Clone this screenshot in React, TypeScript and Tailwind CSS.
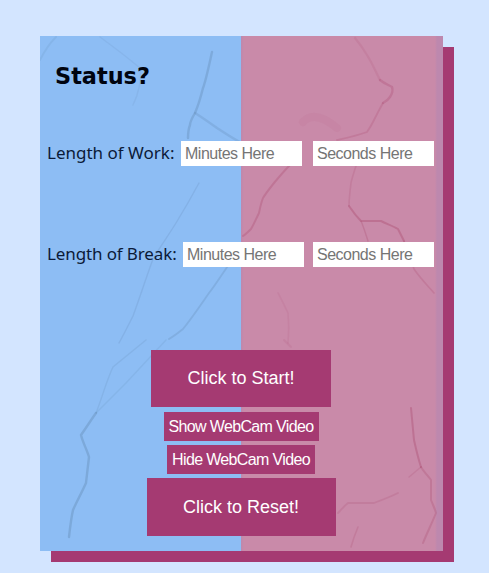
type Vein = [string, number, number];

const blueVeins: Vein[] = [
  ["M212 52 C208 70 206 80 203 88 C200 100 198 106 195 113 C192 118 190 122 190 125 C188 130 188 134 188 138", 2.4, 0.28],
  ["M195 113 C203 118 210 123 217 128 C225 133 232 138 240 142", 2.4, 0.2],
  ["M100 37 C115 48 128 58 140 68 C142 80 138 95 133 105", 1.4, 0.1],
  ["M199 183 C192 196 184 210 176 223 C168 236 160 247 153 259 C146 278 140 297 133 316 C128 326 124 334 119 343", 1.4, 0.16],
  ["M243 243 C235 255 228 266 221 276 C217 282 213 288 209 293 C200 306 192 318 183 329 C178 333 174 336 169 339", 1.8, 0.22],
  ["M146 340 C135 349 124 358 113 367 C106 382 102 398 96 413", 1.4, 0.14],
  ["M96 413 C91 420 86 428 81 435 C83 443 87 450 89 457 C88 466 87 475 86 483 C82 492 77 501 73 510 C71 519 70 528 69 537", 2.4, 0.3],
  ["M166 340 C152 355 139 369 126 383 C116 393 106 403 96 413", 1.4, 0.12],
  ["M40 60 C45 50 50 43 56 37", 1.8, 0.12],
];

const pinkVeins: Vein[] = [
  ["M355 38 C360 44 364 50 367 55 C372 63 376 72 380 80", 2.2, 0.14],
  ["M380 80 C385 84 389 85 392 87 C393 90 392 94 390 97 C388 100 385 102 383 103", 2.4, 0.28],
  ["M383 103 C379 110 376 116 373 122 C371 126 369 129 367 132 C356 136 346 138 337 140", 1.8, 0.22],
  ["M356 166 C354 172 352 178 351 183 C350 191 349 199 349 206", 1.6, 0.18],
  ["M349 206 C353 212 357 217 361 221 C368 221 375 221 381 221 C387 224 393 226 398 229 C400 233 402 237 404 241", 2, 0.36],
  ["M361 221 C364 228 366 235 368 241", 1.4, 0.26],
  ["M404 241 C408 250 411 260 414 269 C420 278 428 286 434 293", 1.6, 0.22],
  ["M290 165 C284 171 279 177 274 183 C270 188 266 193 263 198 C261 203 260 208 259 213 C256 219 254 224 251 229 C248 232 246 234 243 236", 2, 0.3],
  ["M278 293 C282 300 285 307 288 313 C289 323 289 333 288 343", 1.6, 0.1],
  ["M284 340 C287 343 289 345 291 347", 1.8, 0.12],
  ["M411 408 C412 419 413 430 414 440 C416 449 418 458 421 467", 2, 0.34],
  ["M421 467 C424 472 428 476 431 480 C431 487 431 494 431 500 C433 505 435 509 436 513 C432 523 427 533 423 543", 2, 0.26],
  ["M421 467 C417 470 413 474 409 477", 1.4, 0.18],
  ["M398 493 C390 497 382 500 374 503 C365 503 356 503 348 503 C344 506 341 510 338 513", 1.8, 0.18],
  ["M358 527 C355 534 353 540 351 547", 1.6, 0.2],
  ["M303 122 C312 112 325 118 337 128", 8, 0.06],
];

const inputClass =
  "h-[25px] w-[121px] bg-white px-[4px] [font-family:'Liberation_Sans',Arial,sans-serif] text-[16px] tracking-[-0.5px] outline-none placeholder:text-[#757575]";
const labelClass =
  "font-['Noto_Sans',sans-serif] text-[17px] leading-[25px] whitespace-nowrap text-[#0b1a38]";
const buttonClass = "whitespace-nowrap bg-[#a53a72] px-0 py-0";

export default function App() {
  return (
    <div className="min-h-[573px] w-[489px] overflow-hidden bg-[#d3e5ff] pl-[40px] pt-[36px]">
      <div className="relative flex h-[515px] w-[403px] flex-col shadow-[11px_11px_0_#a53a72]">
        <div className="absolute inset-0 flex">
          <div className="h-full w-[201px] bg-[#8dbdf4]" />
          <div className="h-full w-[202px] bg-[linear-gradient(90deg,#bd88ae_0px,#c98aa9_3px,#c98aa9_194px,#bd88ae_196px,#bd88ae_202px)]" />
        </div>
        <svg className="absolute inset-0 blur-[0.7px]" width="403" height="515" viewBox="40 36 403 515" fill="none">
          {blueVeins.map(([d, w, o]) => (
            <path key={d} d={d} stroke="#56799f" strokeOpacity={o} strokeWidth={w} strokeLinecap="round" />
          ))}
          {pinkVeins.map(([d, w, o]) => (
            <path key={d} d={d} stroke="#a8446a" strokeOpacity={o} strokeWidth={w} strokeLinecap="round" />
          ))}
        </svg>
        <div className="relative flex h-full flex-col">
          <h1 className="ml-[15px] mt-[25px] h-[30px] font-['DejaVu_Sans',sans-serif] text-[22.4px] leading-[30px] font-bold text-[#00040f]">
            Status?
          </h1>
          <div className="ml-[7px] mt-[50px] flex h-[25px] items-center">
            <span className={`w-[134px] ${labelClass} -translate-y-[1px]`}>Length of Work:</span>
            <input placeholder="Minutes Here" className={inputClass} />
            <input placeholder="Seconds Here" className={`ml-[11px] ${inputClass}`} />
          </div>
          <div className="ml-[7px] mt-[76px] flex h-[25px] items-center">
            <span className={`w-[136px] tracking-[-0.12px] ${labelClass} -translate-y-[1px]`}>Length of Break:</span>
            <input placeholder="Minutes Here" className={inputClass} />
            <input placeholder="Seconds Here" className={`ml-[9px] ${inputClass}`} />
          </div>
          <div className="mt-[83px] flex flex-col items-center pr-[1px] font-['Liberation_Sans',sans-serif] text-white">
            <button className={`h-[57px] w-[180px] text-[18px] ${buttonClass}`}>Click to Start!</button>
            <button className={`mt-[5px] h-[29px] w-[155px] text-[16px] tracking-[-0.65px] ${buttonClass}`}>Show WebCam Video</button>
            <button className={`mt-[4px] h-[29px] w-[148px] text-[16px] tracking-[-0.65px] ${buttonClass}`}>Hide WebCam Video</button>
            <button className={`mt-[4px] h-[58px] w-[189px] text-[18px] ${buttonClass}`}>Click to Reset!</button>
          </div>
        </div>
      </div>
    </div>
  );
}
